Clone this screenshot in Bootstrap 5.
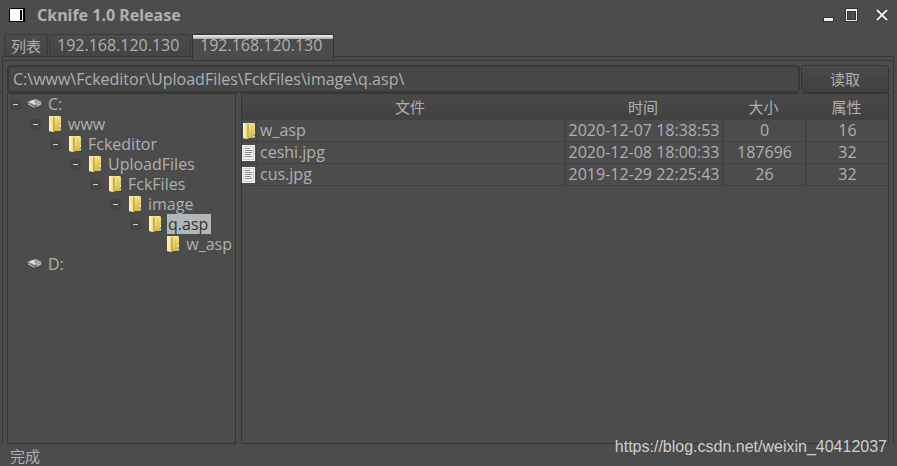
<!DOCTYPE html>
<html lang="zh-CN">
<head>
<meta charset="utf-8">
<meta name="viewport" content="width=device-width, initial-scale=1">
<title>Cknife 1.0 Release</title>
<link href="https://cdn.jsdelivr.net/npm/bootstrap@5.3.0/dist/css/bootstrap.min.css" rel="stylesheet">
<style>
body{background:#4c4c4c;color:#b0b0b0;font:16px/20px "Open Sans","Noto Sans CJK SC",sans-serif}
.zh{font-family:"Noto Sans CJK SC",sans-serif;font-size:15px}
svg{display:block;flex:none}
.titlebar{height:33px;padding:0 8px 3px}
.titlebar h1{font-family:"Noto Sans",sans-serif;font-size:16px;line-height:20px;font-weight:700;margin:0 0 0 11px}
.winbtn{background:none;border:0;padding:0;margin-left:9px}
.tabs{height:24px;padding-left:4px;gap:1px}
.tabs .nav-link{height:23px;margin-top:1px;padding:0 7px;line-height:21px;color:#b0b0b0;border:1px solid #3b3b3b;border-bottom:0;border-radius:2px 2px 0 0;background:linear-gradient(#4b4b4b,#444)}
.tabs .zh{padding:0 6px}
.tabs .wide{width:142px}
.tabs .active{height:25px;background:linear-gradient(#f4f4f4,#aaa 4px,#4c4c4c 4px);color:#b0b0b0;border-color:#333;position:relative}
.frame{border:1px solid #363636;border-bottom:0;margin:-1px 3px 0 2px}
.inner{border-top:1px solid #363636;margin-top:3px;padding:4px 4px 0 4px}
.path{height:28px;background:#474747;border:2px solid #393939;border-radius:4px;color:#b0b0b0;padding:0 4px;font-size:16px;min-width:0}
.path:focus{background:#474747;color:#b0b0b0}
.read{width:88px;height:28px;padding:0;border:1px solid #353535;border-radius:3px;color:#b0b0b0;background:linear-gradient(#4b4b4b,#404040)}
.form-gap{gap:1px}
.workspace{gap:5px}
.tree{width:229px;border:1px solid #363636}
.tree ul{list-style:none;margin:0;padding:0 0 0 20px}
.tree>ul{padding:0}
.node{height:20px}
.node button{width:11px;height:11px;border:0;border-radius:2px;background:#444;padding:0;margin-left:2px;display:flex;align-items:center;justify-content:center}
.node button::before{content:"";width:5px;height:1px;background:#d0d0d0}
.node button.leaf{visibility:hidden}
.node svg{margin-left:6px}
.node span{padding:0 3px 0 1px;margin-left:4px;white-space:nowrap}
.node .sel{background:#b3b6b9;color:#333}
.files{border:1px solid #363636;min-width:0}
.files table{width:100%;table-layout:fixed;border-collapse:separate;border-spacing:0}
.files .icon-col{width:14px}
.files .time-col{width:158px}
.files .num-col{width:83px}
.files th{height:26px;font-weight:400;text-align:center;padding:0;background:linear-gradient(#494949,#414141)}
.files td{height:22px;padding:0;text-align:center;line-height:21px;border-bottom:1px solid #404040;border-left:2px solid #434343;white-space:nowrap}
.files td:first-child{border-left:0}
.files td:nth-child(2){border-left-width:1px;text-align:left;padding-left:3px}
.status{height:22px;padding:2px 10px 0}
.watermark{position:absolute;right:10px;bottom:9px;font:16px/20px "Liberation Sans",Arial,sans-serif;color:#cfcfcf;text-decoration:none}
</style>
<script src="https://cdn.jsdelivr.net/npm/bootstrap@5.3.0/dist/js/bootstrap.bundle.min.js"></script>
</head>
<body>
<svg width="0" height="0" class="position-absolute" aria-hidden="true"><defs>
<linearGradient id="gold"><stop offset="0" stop-color="#fbf3bd"/><stop offset=".6" stop-color="#f3e495"/><stop offset="1" stop-color="#e0c665"/></linearGradient>
<linearGradient id="gold2" x2=".5" y2="1"><stop offset="0" stop-color="#fbf0a8"/><stop offset=".5" stop-color="#f0dc7c"/><stop offset="1" stop-color="#dbb947"/></linearGradient>
<symbol id="folder" viewBox="0 0 14 16"><path d="M1 0h11l1 1v13l-1 1H7l-2 1-4-1z" fill="url(#gold2)"/><path d="M1 0h4l1 2v14l-5-1z" fill="url(#gold)"/><path d="M5 2l2-1v13l-1 2H5z" fill="#cfae4e"/><path d="M9 2h1v11l-1 1z" fill="#d0aa44" opacity=".45"/><path d="M12 9h1v5h-1z" fill="#eef4f5"/><path d="M12 11h1v2h-1z" fill="#3da4d8"/></symbol>
<symbol id="disk" viewBox="0 0 16 10"><path d="M0 3l5-2 4-1 7 3v3L9 10 7 9 1 6z" fill="#3a3a3a"/><path d="M0 3l5-2 4-1 6 3-7 4z" fill="#a9a9a9"/><path d="M2 3l5-2 4 2-4 2z" fill="#eaeaea"/><path d="M6 3l3-2 3 2-3 1z" fill="#999"/><path d="M1 4l7 4v1L1 5.500z" fill="#c8c8c8"/><path d="M8 7l7-3v2L9 9z" fill="#777"/><path d="M10 6l4-2v1l-4 2z" fill="#eee"/></symbol>
<symbol id="doc" viewBox="0 0 13 16"><path d="M0 0h13v16H0z" fill="#f4f4f4"/><path d="M1.500 1.500h10v13h-10z" fill="#f4f4f4" stroke="#ccc"/><path d="M3 3.500h5M3 5.500h7M3 7.500h7M3 9.500h6M3 11.500h7" stroke="#888"/></symbol>
</defs></svg>
<div class="d-flex flex-column vh-100 overflow-hidden position-relative">
<header class="titlebar d-flex align-items-center">
<svg width="18" height="16" viewBox="0 0 18 16"><path d="M1 1h16v14H1z" fill="#000"/><path d="M2 2h13v12H2z" fill="#fff"/><path d="M12 3h2v10h-2z" fill="#000"/></svg>
<h1 class="me-auto">Cknife 1.0 Release</h1>
<button class="winbtn" aria-label="最小化"><svg width="13" height="14" viewBox="0 0 13 14"><path d="M0 9h11v5H0z" fill="#333"/><path d="M1 10h9v3H1z" fill="#eee"/></svg></button>
<button class="winbtn" aria-label="最大化"><svg width="14" height="14" viewBox="0 0 14 14"><path d="M0 0h13v14H0zM3 4v7h7V4z" fill="#333" fill-rule="evenodd"/><path d="M1 1h11v12H1zM2 3v9h9V3z" fill="#eee" fill-rule="evenodd"/></svg></button>
<button class="winbtn ms-3" aria-label="关闭"><svg width="14" height="14" viewBox="0 0 14 14"><path d="M2 2l10 10M12 2L2 12" stroke="#333" stroke-width="4"/><path d="M2 2l10 10M12 2L2 12" stroke="#eee" stroke-width="2"/></svg></button>
</header>
<nav class="tabs nav flex-nowrap" aria-label="连接">
<a class="nav-link zh" href="#">列表</a>
<a class="nav-link wide" href="#">192.168.120.130</a>
<a class="nav-link wide active" href="#" aria-current="page">192.168.120.130</a>
</nav>
<main class="frame flex-grow-1 d-flex flex-column">
<div class="inner flex-grow-1 d-flex flex-column">
<form class="d-flex form-gap">
<input class="path form-control" aria-label="路径" value="C:\www\Fckeditor\UploadFiles\FckFiles\image\q.asp\">
<button type="button" class="read zh btn flex-shrink-0">读取</button>
</form>
<div class="d-flex flex-grow-1 workspace">
<aside class="tree flex-shrink-0">
<ul>
<li><div class="node d-flex align-items-center"><button aria-label="折叠 C:"></button><svg width="16" height="10"><use href="#disk"/></svg><span>C:</span></div>
<ul><li><div class="node d-flex align-items-center"><button aria-label="折叠 www"></button><svg width="16" height="16"><use href="#folder"/></svg><span>www</span></div>
<ul><li><div class="node d-flex align-items-center"><button aria-label="折叠 Fckeditor"></button><svg width="16" height="16"><use href="#folder"/></svg><span>Fckeditor</span></div>
<ul><li><div class="node d-flex align-items-center"><button aria-label="折叠 UploadFiles"></button><svg width="16" height="16"><use href="#folder"/></svg><span>UploadFiles</span></div>
<ul><li><div class="node d-flex align-items-center"><button aria-label="折叠 FckFiles"></button><svg width="16" height="16"><use href="#folder"/></svg><span>FckFiles</span></div>
<ul><li><div class="node d-flex align-items-center"><button aria-label="折叠 image"></button><svg width="16" height="16"><use href="#folder"/></svg><span>image</span></div>
<ul><li><div class="node d-flex align-items-center"><button aria-label="折叠 q.asp"></button><svg width="16" height="16"><use href="#folder"/></svg><span class="sel">q.asp</span></div>
<ul><li><div class="node d-flex align-items-center"><button class="leaf" tabindex="-1" aria-hidden="true"></button><svg width="16" height="16"><use href="#folder"/></svg><span>w_asp</span></div></li></ul>
</li></ul></li></ul></li></ul></li></ul></li></ul></li></ul></li>
<li><div class="node d-flex align-items-center"><button class="leaf" tabindex="-1" aria-hidden="true"></button><svg width="16" height="10"><use href="#disk"/></svg><span>D:</span></div></li>
</ul>
</aside>
<section class="files flex-grow-1">
<table>
<colgroup><col class="icon-col"><col><col class="time-col"><col class="num-col"><col class="num-col"></colgroup>
<thead><tr class="zh"><th></th><th>文件</th><th>时间</th><th>大小</th><th>属性</th></tr></thead>
<tbody>
<tr><td><svg width="14" height="16"><use href="#folder"/></svg></td><td>w_asp</td><td>2020-12-07 18:38:53</td><td>0</td><td>16</td></tr>
<tr><td><svg width="13" height="16"><use href="#doc"/></svg></td><td>ceshi.jpg</td><td>2020-12-08 18:00:33</td><td>187696</td><td>32</td></tr>
<tr><td><svg width="13" height="16"><use href="#doc"/></svg></td><td>cus.jpg</td><td>2019-12-29 22:25:43</td><td>26</td><td>32</td></tr>
</tbody>
</table>
</section>
</div>
</div>
</main>
<footer class="status zh">完成</footer>
<a class="watermark" href="https://blog.csdn.net/weixin_40412037">https://blog.csdn.net/weixin_40412037</a>
</div>
</body>
</html>
